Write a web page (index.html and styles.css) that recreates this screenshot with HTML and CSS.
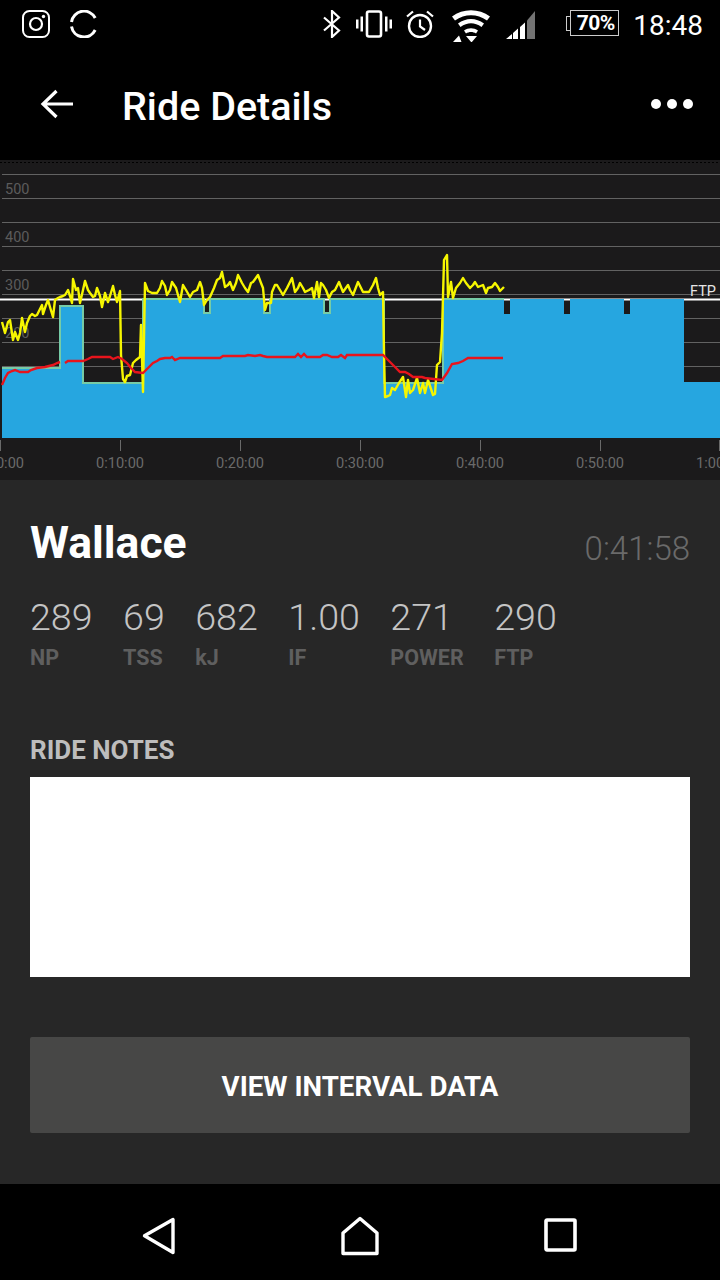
FILE: index.html
```html
<!DOCTYPE html>
<html lang="en">
<head>
    <meta charset="UTF-8">
    <meta name="viewport" content="width=device-width, initial-scale=1.0">
    <title>Ride Details</title>
    <link rel="stylesheet" href="styles.css">
</head>
<body>
    <div class="app">
        <div class="status-bar">
            <div class="status-left">
                <svg class="icon" width="28" height="28" viewBox="0 0 28 28">
                    <rect x="1" y="1" width="26" height="26" rx="6.5" fill="none" stroke="#fff" stroke-width="2"/>
                    <circle cx="14" cy="14" r="6" fill="none" stroke="#fff" stroke-width="2.2"/>
                    <circle cx="21.5" cy="6.5" r="1.7" fill="#fff"/>
                </svg>
                <svg class="icon" width="28" height="28" viewBox="0 0 28 28">
                    <path d="M1.500 12A12.600 12.600 0 0 1 25.200 8" fill="none" stroke="#fff" stroke-width="3"/>
                    <path d="M1.500 16.500A12.600 12.600 0 0 0 25.200 20" fill="none" stroke="#fff" stroke-width="3"/>
                </svg>
            </div>
            <div class="status-right">
                <!-- bluetooth -->
                <svg class="icon" width="18" height="28" viewBox="0 0 18 28">
                    <path d="M1 7.500L16 20.500L9 27V1L16 7.500L1 20.500" fill="none" stroke="#fff" stroke-width="2.200"/>
                </svg>
                <!-- vibrate -->
                <svg class="icon vibrate" width="36" height="28" viewBox="0 0 36 28">
                    <rect x="11" y="1.500" width="14" height="25" rx="2" fill="none" stroke="#fff" stroke-width="2.600"/>
                    <path d="M0 9.500h2.500v9H0zM4.500 6.500H7v15H4.500zM29 6.500h2.500v15H29zM33.500 9.500H36v9h-2.500z" fill="#fff"/>
                </svg>
                <!-- alarm -->
                <svg class="icon alarm" width="28" height="28" viewBox="0 0 28 28">
                    <circle cx="14" cy="16" r="11" fill="none" stroke="#fff" stroke-width="2.400"/>
                    <path d="M14 9.500V16.500L19 20M1 6.500L7 1.500M27 6.500L21 1.500" fill="none" stroke="#fff" stroke-width="2.200"/>
                </svg>
                <!-- wifi with data arrows -->
                <svg class="icon wifi" width="38" height="32" viewBox="0 0 38 32">
                    <path d="M0 6.500C11 -2 27 -2 38 6.500L35 10.500C25 3.500 13 3.500 3 10.500Z" fill="#fff"/>
                    <path d="M6 13.500C14 7.500 24 7.500 32 13.500L29.500 17C22.500 12 15.500 12 8.500 17Z" fill="#fff"/>
                    <path d="M12 20.500C16.500 17.500 21.500 17.500 26 20.500L24 23.500C21 21.500 17 21.500 14 23.500Z" fill="#fff"/>
                    <path d="M14 26H25L19.500 32.500ZM1 32L7 25.500L9.500 32Z" fill="#fff"/>
                </svg>
                <svg class="icon signal" width="30" height="30" viewBox="0 0 30 30">
                    <path d="M0 29L6 24V29ZM7 29V23L12 18.500V29ZM14 29V17L19 12.500V29Z" fill="#fff"/>
                    <path d="M21 29V10.500L29 1V29Z" fill="#fff" opacity="0.45"/>
                </svg>
                <div class="battery"><span class="battery-level">70%</span></div>
                <span class="clock">18:48</span>
            </div>
        </div>

        <div class="toolbar">
            <svg class="back-arrow" width="34" height="30" viewBox="0 0 34 30">
                <path d="M33 15H3M16.500 2L3 15L16.500 28" fill="none" stroke="#fff" stroke-width="3.200"/>
            </svg>
            <h1 class="title">Ride Details</h1>
            <div class="dots">
                <span class="dot"></span>
                <span class="dot"></span>
                <span class="dot"></span>
            </div>
        </div>

        <svg class="chart" width="720" height="320" viewBox="0 160 720 320">
            <path class="chart-edge" d="M0 162.500H720"/>
            <g class="grid">
                <path d="M2 174.500H720M2 198.500H720M2 222.500H720M2 246.500H720M2 270.500H720M2 294.500H720M2 318.500H720M2 342.500H720M2 366.500H720"/>
            </g>
            <g class="y-labels">
                <text x="5" y="194">500</text>
                <text x="5" y="242">400</text>
                <text x="5" y="290">300</text>
                <text x="5" y="338">200</text>
            </g>
            <path class="ftp-line" d="M0 299.500H720"/>
            <text class="ftp-label" x="690" y="296">FTP</text>

            <!-- workout blocks -->
            <path class="blocks" d="M2 438V368H60V306H83V383H143V299H204V314H210V299H264V314H270V299H324V314H330V299H384V383H443V299H504V314H510V299H564V314H570V299H624V314H630V299H684V382H720V438Z"/>
            <path class="blocks-done" d="M2 368H60V306H83V383H143V299H204V313H210V299H264V313H270V299H324V313H330V299H384V383H443V299H504"/>

            <!-- power -->
            <polyline class="power" points="2,322 5,333 8,322 10,320 13,340 15,332 18,340 20,333 22,318 25,332 27,323 30,316 32,314 35,316 37,315 40,309 42,305 43,314 46,305 48,300 50,307 53,317 55,300 58,298 60,297 63,296 65,295 68,290 70,296 72,303 73,279 76,290 78,288 80,303 83,290 85,281 88,290 90,293 93,297 95,296 97,288 100,296 102,307 105,293 108,302 110,296 113,286 115,295 117,302 120,291 121,355 123,379 125,382 127,376 130,375 133,363 136,360 140,357 141,325 143,392 145,283 148,291 152,293 157,293 160,288 162,281 165,286 167,295 170,290 172,282 176,288 180,302 183,285 186,290 190,297 193,292 197,290 200,282 202,288 204,305 207,300 210,297 214,288 217,280 220,278 222,272 225,287 228,285 230,282 233,290 236,283 238,275 242,283 245,288 248,292 251,283 253,282 258,275 261,283 263,288 265,310 267,303 271,303 272,292 275,285 277,285 280,290 283,295 287,288 292,278 295,292 298,288 300,283 303,288 305,292 309,290 312,288 314,298 317,282 319,297 321,283 323,285 326,290 329,298 332,292 335,290 339,282 343,292 348,285 350,290 353,295 358,282 363,292 369,292 373,285 376,278 378,288 380,295 383,292 384,353 385,397 388,396 390,395 392,388 395,390 399,383 403,377 406,397 408,380 410,393 413,390 417,378 420,393 423,383 425,393 428,380 430,386 433,395 435,394 437,365 440,362 442,333 444,260 447,255 448,297 451,282 453,298 456,288 460,283 463,278 466,283 470,288 473,285 475,282 478,287 483,285 486,293 488,288 492,287 495,283 498,287 500,291 504,287"/>

            <!-- average power -->
            <polyline class="average" points="2,385 5,378 8,373 12,371 15,370 20,372 28,372 31,370 37,368 45,367 53,365 57,363 60,362"/>
            <polyline class="average" points="65,363 68,361 83,361 88,359 92,357 110,357 113,359 118,357 122,359 127,363 131,368 135,372 143,373 148,368 153,363 157,361 160,359 165,358 170,358 172,357 175,360 180,358 220,358 223,356 245,356 248,355 255,356 260,355 263,356 267,357 295,357 298,354 301,357 304,354 307,357 320,357 323,355 327,355 332,357 338,357 341,355 345,358 347,355 383,355 388,360 392,364 395,367 400,372 405,372 409,374 413,377 422,377 425,378 442,380 447,373 452,364 458,363 463,361 468,358 503,358"/>

            <!-- time axis -->
            <path class="ticks" d="M0.500 440V451M120.500 440V451M240.500 440V451M360.500 440V451M480.500 440V451M600.500 440V451M719.500 440V451"/>
            <g class="x-labels">
                <text x="0" y="468">0:00:00</text>
                <text x="120" y="468">0:10:00</text>
                <text x="240" y="468">0:20:00</text>
                <text x="360" y="468">0:30:00</text>
                <text x="480" y="468">0:40:00</text>
                <text x="600" y="468">0:50:00</text>
                <text x="720" y="468">1:00:00</text>
            </g>
        </svg>

        <div class="content">
            <div class="ride-head">
                <h2 class="ride-name">Wallace</h2>
                <span class="ride-time">0:41:58</span>
            </div>
            <div class="stats">
                <div class="stat"><span class="stat-value">289</span><span class="stat-label">NP</span></div>
                <div class="stat"><span class="stat-value">69</span><span class="stat-label">TSS</span></div>
                <div class="stat"><span class="stat-value">682</span><span class="stat-label">kJ</span></div>
                <div class="stat"><span class="stat-value">1.00</span><span class="stat-label">IF</span></div>
                <div class="stat"><span class="stat-value">271</span><span class="stat-label">POWER</span></div>
                <div class="stat"><span class="stat-value">290</span><span class="stat-label">FTP</span></div>
            </div>
            <div class="notes-label">RIDE NOTES</div>
            <div class="notes"></div>
            <button class="interval-button" type="button">VIEW INTERVAL DATA</button>
        </div>

        <div class="nav-bar">
            <svg width="36" height="40" viewBox="0 0 36 40">
                <path d="M31 3.500V36.500L2.500 19.800Z" fill="none" stroke="#fff" stroke-width="3.400" stroke-linejoin="round"/>
            </svg>
            <svg width="40" height="40" viewBox="0 0 40 40">
                <path d="M3 37.500V17L20 2.500L37 17V37.500Z" fill="none" stroke="#fff" stroke-width="3.400" stroke-linejoin="round"/>
            </svg>
            <svg width="36" height="40" viewBox="0 0 36 40">
                <rect x="5" y="4" width="29" height="30" rx="1" fill="none" stroke="#fff" stroke-width="3.600"/>
            </svg>
        </div>
    </div>
</body>
</html>
```

FILE: styles.css
```css
* {
    box-sizing: border-box;
}
body {
    margin: 0;
    padding: 0;
    background-color: #000;
    font-family: Roboto, "Liberation Sans", sans-serif;
    color: #fff;
}
.app {
    width: 720px;
    height: 1280px;
    display: flex;
    flex-direction: column;
    overflow: hidden;
}

/* status bar */
.status-bar {
    height: 52px;
    flex: none;
    padding: 10px 17px 0 22px;
    display: flex;
    justify-content: space-between;
    align-items: flex-start;
}
.status-left {
    display: flex;
    gap: 20px;
}
.status-right {
    display: flex;
    align-items: flex-start;
}
.icon {
    display: block;
}
.vibrate {
    margin-left: 15px;
}
.alarm {
    margin-left: 14px;
}
.wifi {
    margin-left: 18px;
}
.signal {
    margin-left: 16px;
}
.battery {
    margin-left: 34px;
    width: 49px;
    height: 26px;
    border: 1.5px solid #ccc;
    position: relative;
    display: flex;
    align-items: center;
    justify-content: center;
}
/* battery cap on the left side */
.battery::before {
    content: "";
    position: absolute;
    left: -5px;
    top: 5px;
    width: 4px;
    height: 13px;
    border: 1.5px solid #ccc;
    border-right: none;
}
.battery-level {
    font-size: 21px;
    font-weight: 700;
    letter-spacing: -0.5px;
    padding-left: 2px;
}
.clock {
    margin-left: 14px;
    font-size: 28px;
    line-height: 32px;
}

/* toolbar */
.toolbar {
    height: 108px;
    flex: none;
    padding: 0 27px 0 40px;
    display: flex;
    align-items: center;
}
.back-arrow {
    flex: none;
    margin-top: -4px;
}
.title {
    margin: 0 0 0 48px;
    font-size: 39.5px;
    font-weight: 500;
    flex: 1;
}
.dots {
    display: flex;
    gap: 6px;
    margin-top: -4px;
}
.dot {
    width: 10px;
    height: 10px;
    border-radius: 50%;
    background-color: #fff;
}

/* chart */
.chart {
    display: block;
    flex: none;
    background-color: #1b1a1b;
}
.chart-edge {
    stroke: #000;
    stroke-width: 1;
    stroke-dasharray: 2 2;
}
.grid path {
    stroke: #626262;
    stroke-width: 1;
    fill: none;
}
.y-labels text {
    fill: #5c5c5c;
    font-size: 14.5px;
}
.x-labels text {
    fill: #6a6a6a;
    font-size: 14.6px;
    text-anchor: middle;
}
.ftp-line {
    stroke: #fff;
    stroke-width: 2;
}
.ftp-label {
    fill: #e6e6e6;
    font-size: 14.5px;
}
.blocks {
    fill: #26a6e0;
}
.blocks-done {
    fill: none;
    stroke: #76cba6;
    stroke-width: 2;
}
.power {
    fill: none;
    stroke: #f6f600;
    stroke-width: 2.4;
    stroke-linejoin: round;
}
.average {
    fill: none;
    stroke: #e8141c;
    stroke-width: 2.4;
}
.ticks {
    stroke: #6a6a6a;
    stroke-width: 1;
}

/* ride summary */
.content {
    height: 704px;
    flex: none;
    background-color: #272727;
    padding: 0 30px;
}
.ride-head {
    padding-top: 39px;
    display: flex;
    justify-content: space-between;
    align-items: flex-end;
}
.ride-name {
    margin: 0;
    font-size: 44.5px;
    line-height: 48px;
    font-weight: 700;
}
.ride-time {
    font-size: 33px;
    font-weight: 300;
    line-height: 36px;
    color: #6a6a6a;
}
.stats {
    margin-top: 29px;
    display: flex;
    gap: 30.5px;
}
.stat {
    display: flex;
    flex-direction: column;
}
.stat-value {
    font-size: 37.6px;
    font-weight: 300;
    line-height: 42px;
    color: #c4c4c4;
}
.stat-label {
    margin-top: 8px;
    font-size: 21.5px;
    font-weight: 700;
    line-height: 24px;
    color: #5f5f5f;
}
.notes-label {
    margin-top: 66px;
    font-size: 26px;
    font-weight: 700;
    line-height: 28px;
    color: #bdbdbd;
}
.notes {
    margin-top: 13px;
    height: 200px;
    background-color: #fff;
}
.interval-button {
    display: block;
    margin-top: 60px;
    width: 100%;
    height: 96px;
    padding-top: 3px;
    border: none;
    border-radius: 2px;
    background-color: #474746;
    color: #fff;
    font-family: inherit;
    font-size: 27.7px;
    font-weight: 700;
}

/* navigation bar */
.nav-bar {
    flex: 1;
    padding: 32px 143px 0 142px;
    display: flex;
    justify-content: space-between;
    align-items: flex-start;
}
```
